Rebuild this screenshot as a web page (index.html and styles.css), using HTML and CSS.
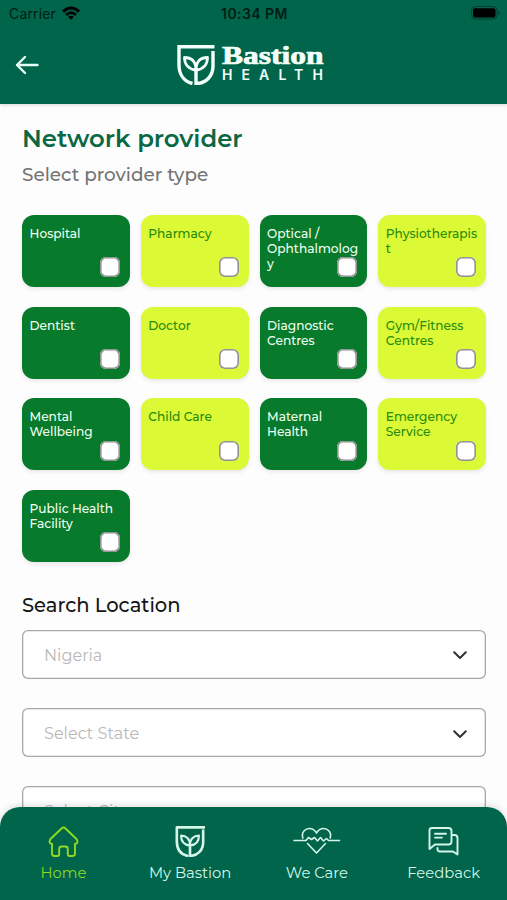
FILE: index.html
```html
<!DOCTYPE html>
<html lang="en">
<head>
<meta charset="utf-8">
<title>Network provider</title>
<link rel="stylesheet" href="styles.css">
</head>
<body>
<svg class="defs" aria-hidden="true">
  <symbol id="shield" viewBox="0 0 38 40">
    <path d="M37.500 1.800H2V20C2 30 7.500 36.500 15.500 38.500M36 6V21C36 31 29 38.500 19 38.500V24" fill="none" stroke="currentColor" stroke-width="3.400"/>
    <path d="M19 25C19 16 14 12.500 7.500 12.500C7.500 20 12 24.500 19 25ZM19 25C19 16 24 12.500 30.500 12.500C30.500 20 26 24.500 19 25Z" fill="none" stroke="currentColor" stroke-width="2.800" stroke-linejoin="round"/>
  </symbol>
</svg>
<div class="screen">
  <header class="header">
    <div class="status">
      <div class="carrier"><span>Carrier</span>
        <svg width="18" height="14" viewBox="0 0 18 14"><path d="M0 4.600Q9-3.800 18 4.600L16 6.700Q9 .1 2 6.700ZM3.100 7.800Q9 2.500 14.900 7.800L12.900 9.900Q9 6.300 5.100 9.900ZM6.200 11Q9 8.500 11.800 11L9 13.800Z"/></svg>
      </div>
      <div class="time">10:34 PM</div>
      <svg class="battery" width="29" height="14" viewBox="0 0 29 14"><rect x=".5" y=".5" width="25.500" height="12.500" rx="3.800" fill="none" stroke="#003f30"/><rect x="2" y="2.200" width="22.500" height="9.200" rx="2"/><path d="M27 4.500Q30 6.700 27 9Z" fill="#003f30"/></svg>
    </div>
    <div class="bar">
      <svg class="back" width="24" height="20" viewBox="0 0 24 20"><path d="M22.500 10H2M10 2L2 10L10 18" fill="none" stroke="#e8fff5" stroke-width="2.400" stroke-linecap="round" stroke-linejoin="round"/></svg>
      <div class="logo">
        <svg width="38" height="40"><use href="#shield"/></svg>
        <div class="wordmark"><span class="name">Bastion</span><span class="sub">HEALTH</span></div>
      </div>
    </div>
  </header>
  <main class="content">
    <h1>Network provider</h1>
    <p class="lead">Select provider type</p>
    <div class="grid">
      <div class="card"><span>Hospital</span><i></i></div>
      <div class="card lime"><span>Pharmacy</span><i></i></div>
      <div class="card"><span>Optical /<br>Ophthalmolog<br>y</span><i></i></div>
      <div class="card lime"><span>Physiotherapis<br>t</span><i></i></div>
      <div class="card"><span>Dentist</span><i></i></div>
      <div class="card lime"><span>Doctor</span><i></i></div>
      <div class="card"><span>Diagnostic<br>Centres</span><i></i></div>
      <div class="card lime"><span>Gym/Fitness<br>Centres</span><i></i></div>
      <div class="card"><span>Mental<br>Wellbeing</span><i></i></div>
      <div class="card lime"><span>Child Care</span><i></i></div>
      <div class="card"><span>Maternal<br>Health</span><i></i></div>
      <div class="card lime"><span>Emergency<br>Service</span><i></i></div>
      <div class="card"><span>Public Health<br>Facility</span><i></i></div>
    </div>
    <h2>Search Location</h2>
    <div class="fields">
      <div class="select"><span>Nigeria</span><svg width="14" height="9" viewBox="0 0 14 9"><path d="M1.200 1.300L7 7L12.800 1.300"/></svg></div>
      <div class="select"><span>Select State</span><svg width="14" height="9" viewBox="0 0 14 9"><path d="M1.200 1.300L7 7L12.800 1.300"/></svg></div>
      <div class="select"><span>Select City</span><svg width="14" height="9" viewBox="0 0 14 9"><path d="M1.200 1.300L7 7L12.800 1.300"/></svg></div>
    </div>
  </main>
  <nav class="tabs">
    <div class="tab active">
      <svg width="32" height="32" viewBox="0 0 32 32"><path d="M16.500 1.500Q17.500 1.500 18.500 2.500L29.500 13Q32 17.500 28 17.700V27.500Q28 30 25.500 30H22.500Q20.800 30 20.800 28V23Q20.800 20.500 18.500 20.500H14.500Q12.200 20.500 12.200 23V28Q12.200 30 10.500 30H7.500Q5 30 5 27.500V17.700Q1 17.500 3.500 13L14.500 2.500Q15.500 1.500 16.500 1.500Z"/></svg>
      <span>Home</span>
    </div>
    <div class="tab">
      <svg class="mark" width="30" height="31"><use href="#shield"/></svg>
      <span>My Bastion</span>
    </div>
    <div class="tab">
      <svg class="pulse" width="48" height="32" viewBox="0 0 48 32"><path d="M9.800 12C8 6 12.500 2.500 16.500 2.500C20 2.500 22 4.500 23.500 7C25 4.500 27 2.500 30.500 2.500C34.500 2.500 39 6 37.200 12M14.500 17.500L23.500 27L32.500 17.500M1 14.500H13L15.500 11.500L18.500 13.500L21.500 11.500L24.500 15L27.500 11.500L30.500 15L33.500 12.500L35.500 14.500H46.500"/></svg>
      <span>We Care</span>
    </div>
    <div class="tab">
      <svg width="32" height="32" viewBox="0 0 32 32"><path d="M4 2H20.500Q23.500 2 23.500 5V15.500Q23.500 18.500 20.500 18.500H7L1.500 23V4.500Q1.500 2 4 2ZM7 7.800H18M7 11.600H14M24 9H26.500Q29.500 9 29.500 12V28.500L25 25.500H12Q9.500 25.500 9.500 23V22"/></svg>
      <span>Feedback</span>
    </div>
  </nav>
</div>
</body>
</html>
```
FILE: styles.css
```css
* { box-sizing: border-box; }
body { margin: 0; font-family: Montserrat, Inter, "Liberation Sans", sans-serif; background: #fdfdfd; }
.defs { position: absolute; width: 0; height: 0; }
.screen { width: 507px; height: 900px; overflow: hidden; position: relative; display: flex; flex-direction: column; }
.header { height: 104px; flex: none; background: #00654b; box-shadow: 0 1px 3px rgba(60, 20, 20, .18); }
.status { height: 27px; display: grid; grid-template-columns: 1fr auto 1fr; align-items: center; padding: 0 7px 0 9px; font-family: Inter, sans-serif; font-size: 14px; color: #001d14; }
.carrier { display: flex; align-items: center; gap: 6px; letter-spacing: .15px; }
.carrier svg { margin-top: -1px; }
.time { font-weight: 600; letter-spacing: .45px; }
.battery { justify-self: end; margin-top: -1px; }
.bar { height: 77px; display: flex; align-items: center; padding-left: 15px; }
.back { flex: none; margin-right: 138px; margin-top: -2px; }
.logo { display: flex; align-items: center; gap: 7px; color: #f4fffa; margin-top: -2px; }
.wordmark { display: flex; flex-direction: column; height: 40px; }
.name { font-family: "Liberation Serif", serif; font-weight: 700; font-size: 25px; line-height: 22px; -webkit-text-stroke: .7px currentColor; transform: scaleX(1.26); transform-origin: left; }
.sub { font-family: Inter, sans-serif; font-weight: 600; font-size: 14px; line-height: 15px; letter-spacing: 9.1px; }
.content { padding: 0 21px 0 22px; height: 796px; flex: none; overflow: hidden; }
h1, h2, p { margin: 0; }
h1 { margin-top: 17px; font-size: 24.4px; line-height: 34px; font-weight: 600; color: #0b6845; }
.lead { margin-top: 7px; font-size: 18.4px; line-height: 26px; font-weight: 500; color: #747474; }
.grid { margin-top: 27px; display: grid; grid-template-columns: repeat(4, 1fr); grid-auto-rows: 72px; gap: 19.6px 11px; }
.card { position: relative; background: #087a2b; color: #effff0; border-radius: 12px; padding: 11px 7.5px; font-size: 12.2px; font-weight: 500; line-height: 15px; white-space: nowrap; box-shadow: 0 2px 4px rgba(0, 0, 0, .09); }
.card.lime { background: #dcf936; color: #278b0c; }
.card i { position: absolute; right: 10px; bottom: 9.7px; width: 20px; height: 20px; box-shadow: inset 0 0 0 1.6px #929292; border-radius: 6px; background: #fff; }
h2 { margin-top: 29px; font-size: 19.5px; line-height: 28px; font-weight: 500; color: #151515; }
.fields { margin-top: 11px; display: flex; flex-direction: column; gap: 29.3px; }
.select { height: 49px; flex: none; box-shadow: inset 0 0 0 1.3px #a8a8ab; border-radius: 6px; background: #fff; padding: 1px 19px 0 22px; display: flex; align-items: center; justify-content: space-between; font-size: 16.1px; color: #b8b8b8; }
.select svg { margin-top: 2px; }
.select svg path { fill: none; stroke: #303030; stroke-width: 2; stroke-linecap: round; stroke-linejoin: round; }
.tabs { position: absolute; left: 0; right: 0; bottom: 0; height: 93px; background: #00654b; border-radius: 20px 20px 0 0; display: grid; grid-template-columns: repeat(4, 1fr); padding-top: 19px; box-shadow: 0 -2px 6px rgba(0, 0, 0, .12); }
.tab { display: flex; flex-direction: column; align-items: center; color: #d4f5e8; font-size: 14.8px; line-height: 20px; }
.tab span { margin-top: 5px; }
.tab svg { height: 32px; fill: none; stroke: currentColor; stroke-width: 1.9; stroke-linecap: round; stroke-linejoin: round; }
.tab .pulse { stroke-width: 1.6; }
.tab .mark { height: 31px; margin-bottom: 1px; }
.tab.active { color: #8edb20; }
```
